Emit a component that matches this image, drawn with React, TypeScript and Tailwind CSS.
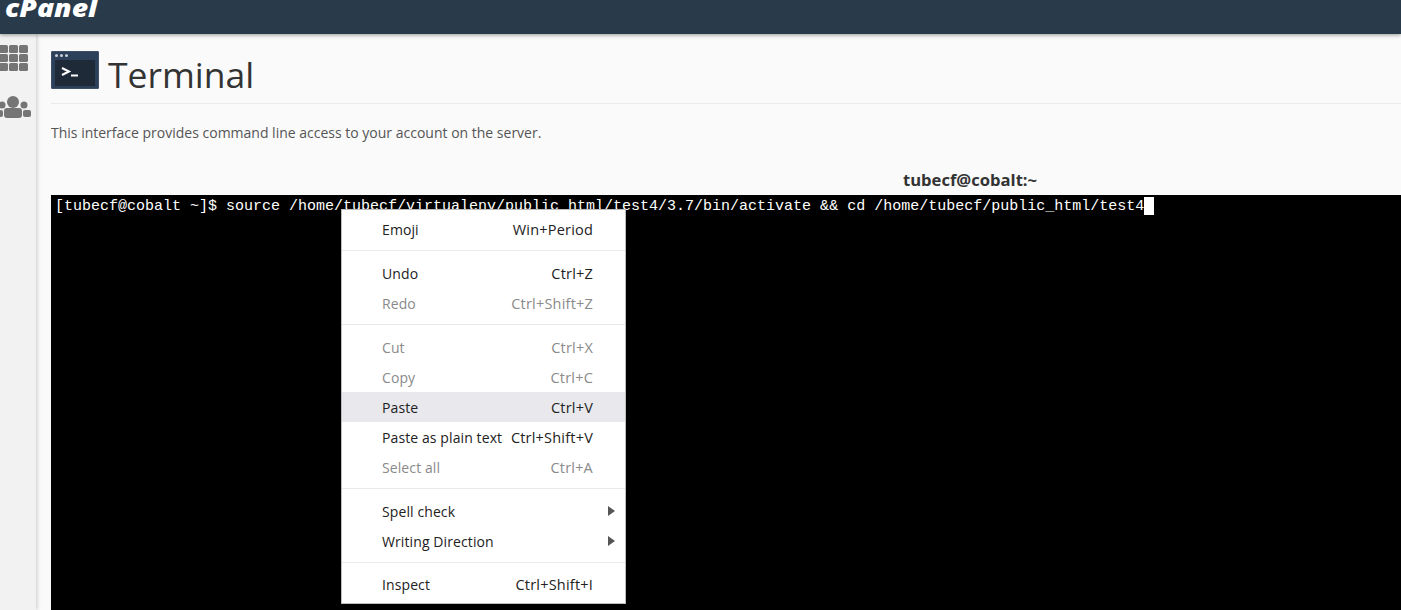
const termLine = '[tubecf@cobalt ~]$ source /home/tubecf/virtualenv/public_html/test4/3.7/bin/activate && cd /home/tubecf/public_html/test4'

type MenuItem = { label: string; hint?: string; off?: boolean; active?: boolean; sub?: boolean }

const menuGroups: MenuItem[][] = [
  [{ label: 'Emoji', hint: 'Win+Period' }],
  [
    { label: 'Undo', hint: 'Ctrl+Z' },
    { label: 'Redo', hint: 'Ctrl+Shift+Z', off: true },
  ],
  [
    { label: 'Cut', hint: 'Ctrl+X', off: true },
    { label: 'Copy', hint: 'Ctrl+C', off: true },
    { label: 'Paste', hint: 'Ctrl+V', active: true },
    { label: 'Paste as plain text', hint: 'Ctrl+Shift+V' },
    { label: 'Select all', hint: 'Ctrl+A', off: true },
  ],
  [
    { label: 'Spell check', sub: true },
    { label: 'Writing Direction', sub: true },
  ],
  [{ label: 'Inspect', hint: 'Ctrl+Shift+I' }],
]

function ContextMenu() {
  return (
    <div className="absolute left-[290px] top-[14px] w-[285px] bg-white border border-[#bdbdbd] font-['Open_Sans',sans-serif] text-[14px]">
      {menuGroups.map((group, i) => {
        const edge = i === 0 || i === menuGroups.length - 1
        return (
          <div
            key={i}
            className={
              i === 0
                ? 'pt-[5px] pb-[5px]'
                : i === menuGroups.length - 1
                  ? 'border-t border-[#e9e9e9] pt-[7px] pb-[3px]'
                  : 'border-t border-[#e9e9e9] pt-[7px] pb-[6px]'
            }
          >
            {group.map((item) => (
              <div
                key={item.label}
                className={`relative flex h-[30px] items-center justify-between pl-[40px] pr-[32px] ${edge ? '' : 'pt-[2px]'} ${item.active ? 'bg-[#e8e8ed]' : ''} ${item.off ? 'text-[#8a8a8a]' : 'text-[#222]'}`}
              >
                <span className="tracking-[0.1px]">{item.label}</span>
                {item.hint && <span className="text-[14.5px] tracking-[0.2px]">{item.hint}</span>}
                {item.sub && (
                  <svg className="absolute right-[10px] top-[10px] w-[7px] h-[10px]" viewBox="0 0 7 10">
                    <path d="M0 0L7 5L0 10Z" fill="#555" />
                  </svg>
                )}
              </div>
            ))}
          </div>
        )
      })}
    </div>
  )
}

export default function App() {
  return (
    <div className="w-[1401px] h-[610px] overflow-hidden flex flex-col bg-[#fafafa] font-['Open_Sans',sans-serif]">
      {/* top bar */}
      <div className="relative z-10 h-[34px] shrink-0 bg-[#293a4a] shadow-[0_1px_4px_rgba(0,0,0,0.4)] overflow-hidden">
        <span className="block ml-[5px] mt-[-9px] origin-left scale-x-[1.18] text-[24px] leading-[33px] font-extrabold italic text-white">
          cPanel
        </span>
      </div>

      <div className="flex flex-1 min-h-0">
        {/* sidebar */}
        <div className="w-[36px] shrink-0 bg-[#f2f2f2] shadow-[1px_0_4px_rgba(0,0,0,0.2)] overflow-hidden pt-[11px]">
          <div className="grid grid-cols-3 gap-[1.5px] w-[29px] ml-[-1px]">
            {Array.from({ length: 9 }).map((_, i) => (
              <div key={i} className="h-[7.5px] rounded-[1.5px] bg-[#757575]" />
            ))}
          </div>
          <svg className="mt-[25px] ml-[-1px] block" width="34" height="24" viewBox="0 0 34 24">
            <g fill="#757575">
              <circle cx="14" cy="6" r="6" />
              <circle cx="3" cy="9" r="3.5" />
              <circle cx="25" cy="9" r="3.5" />
              <rect x="5" y="12" width="18" height="10" rx="3" />
              <rect x="0" y="14" width="4" height="7" rx="2" />
              <rect x="24" y="14" width="8" height="7" rx="2" />
            </g>
          </svg>
        </div>

        {/* content */}
        <div className="flex-1 min-w-0 pl-[15px]">
          <div className="flex items-start h-[70px] pt-[17px] border-b border-[#eaeaea]">
            <div className="relative w-[48px] h-[38px] rounded-[1px] bg-[#2d405a] pt-[8px] px-[3px] pb-[2px] border border-[#3d5068]">
              <div className="absolute left-[3px] top-[2px] flex gap-[2px]">
                <span className="w-[3px] h-[3px] rounded-full bg-[#c8d0da]" />
                <span className="w-[3px] h-[3px] rounded-full bg-[#c8d0da]" />
                <span className="w-[3px] h-[3px] rounded-full bg-[#c8d0da]" />
              </div>
              <div className="h-full bg-[#1f2a38] flex items-start">
                <svg className="mt-[7px] ml-[6px]" width="18" height="12" viewBox="0 0 18 12">
                  <path d="M1 1L8 4.5L1 8" fill="none" stroke="#fff" strokeWidth="2" />
                  <path d="M10 8.5H17" stroke="#fff" strokeWidth="2" />
                </svg>
              </div>
            </div>
            <h1 className="ml-[9px] mt-[1px] text-[35.5px] leading-[44px] text-[#333]">Terminal</h1>
          </div>
          <p className="mt-[19px] text-[14px] leading-[20px] text-[#555]">
            This interface provides command line access to your account on the server.
          </p>
          <div className="mt-[26px] pl-[852px] text-[16.6px] leading-[22px] font-bold text-[#333]">
            tubecf@cobalt:~
          </div>
          <div className="relative mt-[4px] h-[415px] bg-black font-['Liberation_Mono',monospace] text-[15px] leading-[20px] text-white pl-[4px] pt-[2px]">
            <div className="flex whitespace-pre">
              <span>{termLine}</span>
              <span className="inline-block w-[10px] h-[18px] bg-white" />
            </div>
            <ContextMenu />
          </div>
        </div>
      </div>
    </div>
  )
}
